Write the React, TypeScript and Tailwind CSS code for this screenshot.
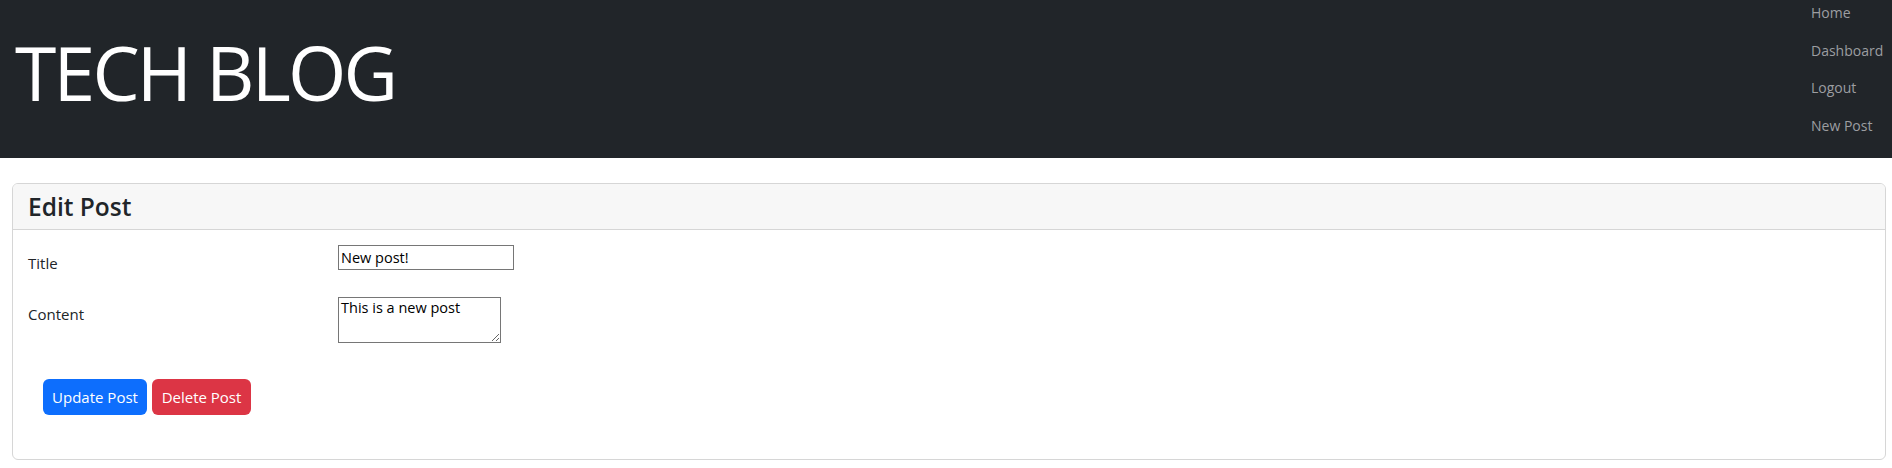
import { useState } from 'react'

const navLinks = ['Home', 'Dashboard', 'Logout', 'New Post']

export default function App() {
    const [title, setTitle] = useState('New post!')
    const [content, setContent] = useState('This is a new post')

    return (
        <div className="min-h-[468px] bg-white text-[#212529] font-['Open_Sans','Noto_Sans',sans-serif] text-[15px]">
            {/* Header */}
            <header className="h-[158px] bg-[#212529] flex justify-between">
                <h1 className="pl-[15px] pt-[26px] text-[75px] font-normal leading-[92px] text-white tracking-[-2.8px]">
                    TECH BLOG
                </h1>
                <nav className="flex flex-col pt-[2px] pr-[10px] w-[81px]">
                    {navLinks.map((link) => (
                        <a
                            key={link}
                            href="#"
                            className="block h-[37.5px] leading-[22.5px] text-[14px] text-[#9c9ea1] hover:text-white whitespace-nowrap"
                        >
                            {link}
                        </a>
                    ))}
                </nav>
            </header>

            {/* Edit card */}
            <main className="pt-[25px] pl-[12px] pr-[6px]">
                <div className="border border-[#d6d6d6] rounded-[6px] overflow-hidden">
                    <div className="bg-[#f7f7f7] border-b border-[#d6d6d6] px-[15px] py-[7px]">
                        <h3 className="text-[24.5px] font-semibold leading-[31px]">Edit Post</h3>
                    </div>
                    <form className="p-[15px] pb-[44px]" onSubmit={(e) => e.preventDefault()}>
                        <div className="flex items-start">
                            <label htmlFor="title" className="w-[310px] pt-[7px] leading-[22.5px]">Title</label>
                            <input
                                id="title"
                                value={title}
                                onChange={(e) => setTitle(e.target.value)}
                                className="w-[176px] h-[25px] border border-[#767676] px-[2px] text-[14.5px] text-black leading-[20px] outline-none"
                            />
                        </div>
                        <div className="flex items-start mt-[22px]">
                            <label htmlFor="content" className="w-[310px] pt-[6px] leading-[22.5px]">Content</label>
                            <textarea
                                id="content"
                                value={content}
                                onChange={(e) => setContent(e.target.value)}
                                className="w-[163px] h-[46px] border border-[#767676] px-[2px] py-0 text-[14.5px] text-black leading-[20px] outline-none"
                            />
                        </div>
                        <div className="flex gap-[5px] mt-[36px] pl-[15px]">
                            <button type="submit" className="w-[104px] h-[36px] rounded-[6px] bg-[#0d6efd] text-white leading-[22px]">
                                Update Post
                            </button>
                            <button type="button" className="w-[99px] h-[36px] rounded-[6px] bg-[#dc3545] text-white leading-[22px]">
                                Delete Post
                            </button>
                        </div>
                    </form>
                </div>
            </main>
        </div>
    )
}
